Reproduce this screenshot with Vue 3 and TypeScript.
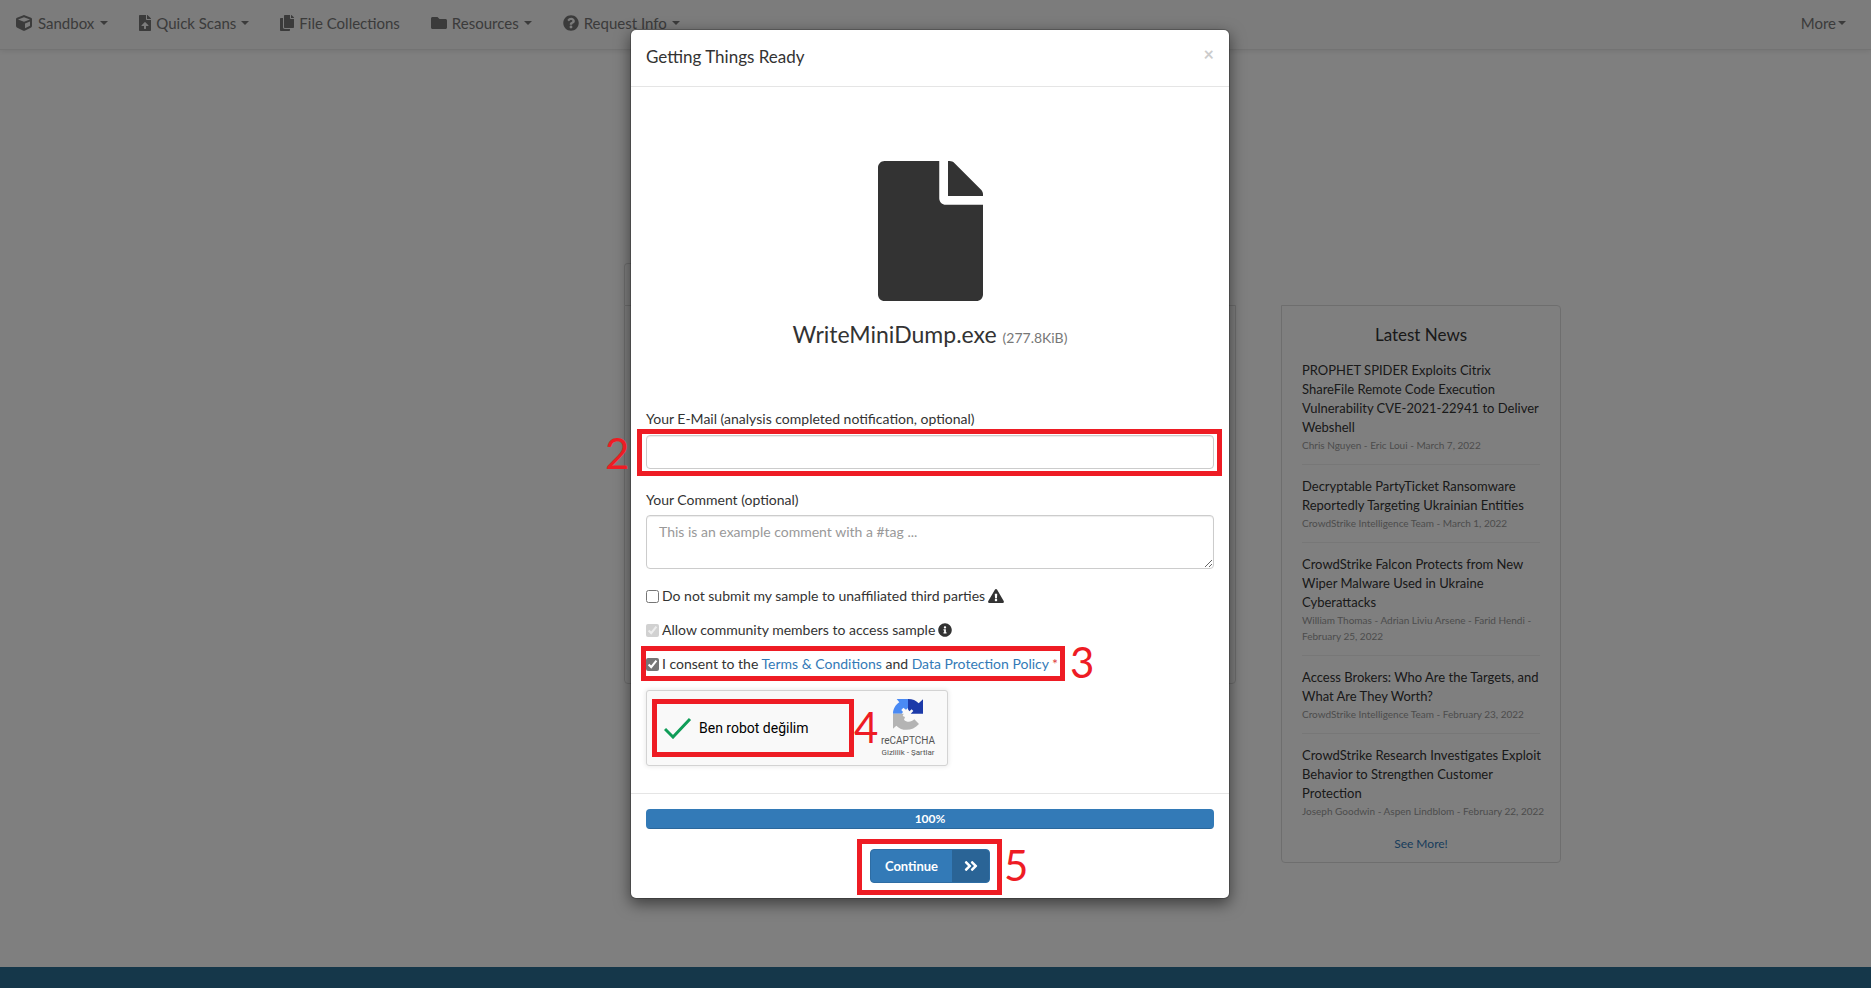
<script setup lang="ts">
import { ref } from 'vue'

interface NavItem {
  label: string
  icon: keyof typeof icons
  menu: boolean
}

interface NewsItem {
  title: string
  meta: string
}

const icons = {
  cube: {
    box: '0 0 512 512',
    width: 16,
    path: 'M239.1 6.3l-208 78c-18.7 7-31.1 25-31.1 45v225.1c0 18.2 10.3 34.8 26.5 42.9l208 104c13.5 6.8 29.4 6.8 42.9 0l208-104c16.3-8.1 26.5-24.8 26.5-42.9V129.3c0-20-12.4-37.9-31.1-44.9l-208-78C262 2.2 250 2.2 239.1 6.3zM256 68.4l192 72v1.1l-192 78-192-78v-1.1l192-72zm32 356V275.5l160-65v133.9l-160 80z',
  },
  upload: {
    box: '0 0 384 512',
    width: 12,
    path: 'M224 136V0H24C10.7 0 0 10.7 0 24v464c0 13.3 10.7 24 24 24h336c13.3 0 24-10.7 24-24V160H248c-13.2 0-24-10.8-24-24zm65.18 216.01H224v80c0 8.84-7.16 16-16 16h-32c-8.84 0-16-7.16-16-16v-80H94.82c-14.28 0-21.41-17.29-11.27-27.36l96.42-95.7c6.65-6.61 17.39-6.61 24.04 0l96.42 95.7c10.15 10.07 3.03 27.36-11.25 27.36zM377 105L279.1 7c-4.5-4.5-10.6-7-17-7H256v128h128v-6.1c0-6.3-2.5-12.4-7-16.9z',
  },
  copy: {
    box: '0 0 448 512',
    width: 14,
    path: 'M320 448v40c0 13.255-10.745 24-24 24H24c-13.255 0-24-10.745-24-24V120c0-13.255 10.745-24 24-24h72v296c0 30.879 25.121 56 56 56h168zm0-344V0H152c-13.255 0-24 10.745-24 24v368c0 13.255 10.745 24 24 24h272c13.255 0 24-10.745 24-24V128H344c-13.2 0-24-10.8-24-24zm120.971-31.029L375.029 7.029A24 24 0 0 0 358.059 0H352v96h96v-6.059a24 24 0 0 0-7.029-16.97z',
  },
  folder: {
    box: '0 0 512 512',
    width: 16,
    path: 'M464 128H272l-64-64H48C21.49 64 0 85.49 0 112v288c0 26.51 21.49 48 48 48h416c26.51 0 48-21.49 48-48V176c0-26.51-21.49-48-48-48z',
  },
  question: {
    box: '0 0 512 512',
    width: 16,
    path: 'M504 256c0 136.997-111.043 248-248 248S8 392.997 8 256C8 119.083 119.043 8 256 8s248 111.083 248 248zM262.655 90c-54.497 0-89.255 22.957-116.549 63.758-3.536 5.286-2.353 12.415 2.715 16.258l34.699 26.31c5.205 3.947 12.621 3.008 16.665-2.122 17.864-22.658 30.113-35.797 57.303-35.797 20.429 0 45.698 13.148 45.698 32.958 0 14.976-12.363 22.667-32.534 33.976C247.128 238.528 216 254.941 216 296v4c0 6.627 5.373 12 12 12h56c6.627 0 12-5.373 12-12v-1.333c0-28.462 83.186-29.647 83.186-106.667 0-58.002-60.165-102-116.531-102zM256 338c-25.365 0-46 20.635-46 46 0 25.364 20.635 46 46 46s46-20.636 46-46c0-25.365-20.635-46-46-46z',
  },
}

const navItems: NavItem[] = [
  { label: 'Sandbox', icon: 'cube', menu: true },
  { label: 'Quick Scans', icon: 'upload', menu: true },
  { label: 'File Collections', icon: 'copy', menu: false },
  { label: 'Resources', icon: 'folder', menu: true },
  { label: 'Request Info', icon: 'question', menu: true },
]

const news: NewsItem[] = [
  {
    title: 'PROPHET SPIDER Exploits Citrix ShareFile Remote Code Execution Vulnerability CVE-2021-22941 to Deliver Webshell',
    meta: 'Chris Nguyen - Eric Loui - March 7, 2022',
  },
  {
    title: 'Decryptable PartyTicket Ransomware Reportedly Targeting Ukrainian Entities',
    meta: 'CrowdStrike Intelligence Team - March 1, 2022',
  },
  {
    title: 'CrowdStrike Falcon Protects from New Wiper Malware Used in Ukraine Cyberattacks',
    meta: 'William Thomas - Adrian Liviu Arsene - Farid Hendi - February 25, 2022',
  },
  {
    title: 'Access Brokers: Who Are the Targets, and What Are They Worth?',
    meta: 'CrowdStrike Intelligence Team - February 23, 2022',
  },
  {
    title: 'CrowdStrike Research Investigates Exploit Behavior to Strengthen Customer Protection',
    meta: 'Joseph Goodwin - Aspen Lindblom - February 22, 2022',
  },
]

const email = ref('')
const comment = ref('')
const withhold = ref(false)
const community = ref(true)
const consent = ref(true)
const progress = ref(100)
</script>

<template>
  <div class="page">
    <nav class="navbar">
      <a v-for="item in navItems" :key="item.label" class="nav-link" href="#">
        <svg :viewBox="icons[item.icon].box" :width="icons[item.icon].width" height="16" aria-hidden="true">
          <path :d="icons[item.icon].path" />
        </svg>
        <span>{{ item.label }}</span>
        <i v-if="item.menu" class="caret"></i>
      </a>
      <a class="nav-link more" href="#"><span>More</span><i class="caret"></i></a>
    </nav>

    <main class="content">
      <section class="upload-panel">
        <div class="upload-tab"></div>
        <div class="upload-body"></div>
      </section>
      <aside class="news">
        <h2>Latest News</h2>
        <article v-for="entry in news" :key="entry.title">
          <a href="#">{{ entry.title }}</a>
          <p>{{ entry.meta }}</p>
        </article>
        <a class="see-more" href="#">See More!</a>
      </aside>
    </main>

    <footer class="page-footer"></footer>
  </div>

  <div class="backdrop">
    <div class="modal" role="dialog" aria-labelledby="modal-title">
      <header class="modal-header">
        <h1 id="modal-title">Getting Things Ready</h1>
        <button class="close" type="button" aria-label="Close">×</button>
      </header>

      <div class="modal-body">
        <div class="file">
          <svg viewBox="0 0 384 512" width="105" height="140" aria-hidden="true">
            <path d="M224 136V0H24C10.7 0 0 10.7 0 24v464c0 13.3 10.7 24 24 24h336c13.3 0 24-10.7 24-24V160H248c-13.2 0-24-10.8-24-24zm160-14.1v6.1H256V0h6.1c6.4 0 12.5 2.5 17 7l97.9 98c4.5 4.5 7 10.6 7 16.9z" />
          </svg>
          <p>WriteMiniDump.exe <small>(277.8KiB)</small></p>
        </div>

        <label class="field-label" for="email">Your E-Mail (analysis completed notification, optional)</label>
        <div class="marked">
          <input id="email" v-model="email" class="control" type="email" />
          <span class="frame frame-email"></span>
          <span class="step step-email">2</span>
        </div>

        <label class="field-label comment-label" for="comment">Your Comment (optional)</label>
        <textarea id="comment" v-model="comment" class="control" placeholder="This is an example comment with a #tag ..."></textarea>

        <div class="checks">
          <div class="check">
            <input id="withhold" v-model="withhold" type="checkbox" />
            <label for="withhold">Do not submit my sample to unaffiliated third parties</label>
            <svg viewBox="0 0 576 512" width="16" height="14" aria-hidden="true">
              <path d="M569.517 440.013C587.975 472.007 564.806 512 527.94 512H48.054c-36.937 0-59.999-40.055-41.577-71.987L246.423 23.985c18.467-32.009 64.72-31.951 83.154 0l239.94 416.028zM288 354c-25.405 0-46 20.595-46 46s20.595 46 46 46 46-20.595 46-46-20.595-46-46-46zm-43.673-165.346l7.418 136c.347 6.364 5.609 11.346 11.982 11.346h48.546c6.373 0 11.635-4.982 11.982-11.346l7.418-136c.375-6.874-5.098-12.654-11.982-12.654h-63.383c-6.884 0-12.356 5.78-11.981 12.654z" />
            </svg>
          </div>
          <div class="check">
            <input id="community" v-model="community" type="checkbox" disabled />
            <label for="community">Allow community members to access sample</label>
            <svg viewBox="0 0 512 512" width="14" height="14" aria-hidden="true">
              <path d="M256 8C119.043 8 8 119.083 8 256c0 136.997 111.043 248 248 248s248-111.003 248-248C504 119.083 392.957 8 256 8zm0 110c23.196 0 42 18.804 42 42s-18.804 42-42 42-42-18.804-42-42 18.804-42 42-42zm56 254c0 6.627-5.373 12-12 12h-88c-6.627 0-12-5.373-12-12v-24c0-6.627 5.373-12 12-12h12v-64h-12c-6.627 0-12-5.373-12-12v-24c0-6.627 5.373-12 12-12h64c6.627 0 12 5.373 12 12v100h12c6.627 0 12 5.373 12 12v24z" />
            </svg>
          </div>
          <div class="check marked">
            <input id="consent" v-model="consent" type="checkbox" />
            <label for="consent">I consent to the <a href="#">Terms &amp; Conditions</a> and <a href="#">Data Protection Policy</a></label>
            <span class="required">*</span>
            <span class="frame frame-consent"></span>
            <span class="step step-consent">3</span>
          </div>
        </div>

        <div class="captcha marked">
          <svg class="tick" viewBox="0 0 28 22" width="28" height="22" aria-hidden="true">
            <path d="M1 12l8 8L26 2" />
          </svg>
          <span class="captcha-text">Ben robot değilim</span>
          <div class="captcha-brand">
            <svg viewBox="12 9 96 96" width="32" height="32" aria-hidden="true">
              <path fill="#4a8af4" d="M60 12H26l8 10C22 30 15 42 15 56h26l4-5-5-6 6-7 8 6 6-5z" />
              <path fill="#1c3aa9" d="M60 12c14 0 24 4 32 13l13-12v43H68l8-8-5-5-7 6-4-6z" />
              <path fill="#b4b4b4" d="M15 56h32l-3 7 7 3-3 8c8 9 22 8 31-1l14 14c-19 22-51 23-68 5L15 101z" />
            </svg>
            <span class="brand-name">reCAPTCHA</span>
            <span class="brand-links"><a href="#">Gizlilik</a> - <a href="#">Şartlar</a></span>
          </div>
          <span class="frame frame-captcha"></span>
          <span class="step step-captcha">4</span>
        </div>
      </div>

      <footer class="modal-footer">
        <div class="progress" role="progressbar" :aria-valuenow="progress">
          <div class="bar" :style="{ width: progress + '%' }">{{ progress }}%</div>
        </div>
        <div class="marked">
          <button class="continue" type="button">
            <span class="continue-text">Continue</span>
            <span class="continue-icon">
              <svg viewBox="0 0 448 512" width="14" height="16" aria-hidden="true">
                <path d="M224.3 273l-136 136c-9.4 9.4-24.6 9.4-33.9 0l-22.6-22.6c-9.4-9.4-9.4-24.6 0-33.9l96.4-96.4-96.4-96.4c-9.4-9.4-9.4-24.6 0-33.9L54.3 103c9.4-9.4 24.6-9.4 33.9 0l136 136c9.5 9.4 9.5 24.6.1 34zm192-34l-136-136c-9.4-9.4-24.6-9.4-33.9 0l-22.6 22.6c-9.4 9.4-9.4 24.6 0 33.9l96.4 96.4-96.4 96.4c-9.4 9.4-9.4 24.6 0 33.9l22.6 22.6c9.4 9.4 24.6 9.4 33.9 0l136-136c9.4-9.2 9.4-24.4 0-33.8z" />
              </svg>
            </span>
          </button>
          <span class="frame frame-continue"></span>
          <span class="step step-continue">5</span>
        </div>
      </footer>
    </div>
  </div>
</template>

<style>
body {
  margin: 0;
}
</style>

<style scoped>
.page,
.backdrop {
  box-sizing: border-box;
  min-height: 100vh;
  font-family: Lato, "Open Sans", sans-serif;
  font-size: 13px;
  line-height: 20px;
  color: #333;
}
.page *,
.backdrop * {
  box-sizing: border-box;
}
.page {
  display: flex;
  flex-direction: column;
  background: #fff;
}
a {
  color: #337ab7;
  text-decoration: none;
}
svg {
  fill: currentColor;
  flex: none;
}

.navbar {
  display: flex;
  align-items: center;
  gap: 31px;
  height: 50px;
  padding: 0 25px 4px 16px;
  background: #f8f8f8;
  border-bottom: 1px solid #e7e7e7;
  box-shadow: 0 1px 6px rgba(0, 0, 0, 0.1);
}
.nav-link {
  display: flex;
  align-items: center;
  gap: 5px;
  font-size: 15px;
  color: #777;
}
.nav-link:first-child {
  gap: 6px;
}
.more {
  gap: 2px;
  margin-left: auto;
}
.caret {
  border-top: 4px solid currentColor;
  border-left: 4px solid transparent;
  border-right: 4px solid transparent;
}

.content {
  flex: 1;
  display: grid;
  grid-template-columns: minmax(0, 2fr) 612px 325px minmax(0, 1fr);
  align-items: start;
  padding-left: 4px;
}
.upload-panel {
  grid-column: 2;
  margin-top: 213px;
}
.upload-tab {
  width: 160px;
  height: 42px;
  border: 1px solid #ddd;
  border-bottom: 0;
  border-radius: 4px 4px 0 0;
}
.upload-body {
  height: 379px;
  border: 1px solid #ddd;
  border-radius: 0 0 4px 4px;
}
.news {
  grid-column: 3;
  margin: 255px 0 0 45px;
  padding: 19px 20px 8px;
  border: 1px solid #ddd;
  border-radius: 0 4px 4px 4px;
}
.news h2 {
  margin: 0 0 4px;
  font-size: 17px;
  font-weight: 400;
  line-height: 20px;
  text-align: center;
}
.news article {
  padding: 12px 0 11px;
  border-bottom: 1px solid #eee;
}
.news article:last-of-type {
  border-bottom: 0;
}
.news article a {
  display: block;
  margin-right: -4px;
  line-height: 19px;
  color: #333;
}
.news article p {
  margin: 0 -8px 0 0;
  font-size: 10px;
  line-height: 16px;
  color: #999;
}
.see-more {
  display: block;
  margin-top: 4px;
  font-size: 12px;
  text-align: center;
}
.page-footer {
  height: 21px;
  background: #2a6e94;
}

.backdrop {
  position: absolute;
  inset: 0;
  display: flex;
  justify-content: center;
  align-items: flex-start;
  padding: 29px 11px 29px 0;
  background: rgba(0, 0, 0, 0.5);
}
.modal {
  width: 600px;
  background: #fff;
  border: 1px solid rgba(0, 0, 0, 0.2);
  background-clip: padding-box;
  border-radius: 6px;
  box-shadow: 0 5px 15px rgba(0, 0, 0, 0.5);
  font-size: 14px;
}
.modal-header {
  display: flex;
  align-items: flex-start;
  justify-content: space-between;
  padding: 14px 15px 17px;
  border-bottom: 1px solid #e5e5e5;
}
.modal-header h1 {
  margin: 0;
  font-size: 17px;
  font-weight: 400;
  line-height: 25px;
}
.close {
  padding: 0;
  border: 0;
  background: none;
  font: 700 18px/20px Lato, sans-serif;
  color: #ccc;
}
.modal-body {
  padding: 74px 15px 27px;
}
.file {
  text-align: center;
}
.file svg {
  display: block;
  margin: 0 auto;
}
.file p {
  margin: 18px 0 56px;
  font-size: 23px;
  line-height: 30px;
}
.file small {
  font-size: 14px;
  color: #777;
}
.field-label {
  display: block;
  margin-bottom: 6px;
}
.comment-label {
  margin: 21px 0 5px;
}
.control {
  display: block;
  width: 100%;
  height: 34px;
  padding: 6px 12px;
  border: 1px solid #ccc;
  border-radius: 4px;
  background: #fff;
  box-shadow: inset 0 1px 1px rgba(0, 0, 0, 0.075);
  font: inherit;
  color: #555;
}
textarea.control {
  height: 54px;
  resize: vertical;
}
.control::placeholder {
  color: #999;
}
.checks {
  display: flex;
  flex-direction: column;
  gap: 14px;
  margin: 17px 0 16px;
}
.check {
  display: flex;
  align-items: center;
  gap: 3px;
}
.check input {
  width: 13px;
  height: 13px;
  margin: 0;
  accent-color: #767676;
}
.required {
  color: #e0403f;
}

.captcha {
  display: flex;
  align-items: center;
  width: 302px;
  height: 76px;
  padding-left: 17px;
  border: 1px solid #d3d3d3;
  border-radius: 3px;
  background: #f9f9f9;
  box-shadow: 0 0 4px 1px rgba(0, 0, 0, 0.08);
  font-family: Roboto, sans-serif;
}
.tick path {
  fill: none;
  stroke: #0f9d58;
  stroke-width: 3;
}
.captcha-text {
  margin-left: 7px;
  font-size: 14px;
  color: #000;
}
.captcha-brand {
  display: flex;
  flex-direction: column;
  align-items: center;
  width: 76px;
  margin: 0 1px 0 auto;
  color: #555;
}
.brand-name {
  margin-top: 4px;
  font-size: 10px;
  line-height: 14px;
}
.brand-links {
  font-size: 8px;
  line-height: 10px;
}
.brand-links a {
  color: inherit;
}

.modal-footer {
  display: flex;
  flex-direction: column;
  align-items: center;
  gap: 20px;
  padding: 15px;
  border-top: 1px solid #e5e5e5;
}
.progress {
  width: 100%;
  height: 20px;
  overflow: hidden;
  border-radius: 4px;
  background: #f5f5f5;
}
.bar {
  height: 100%;
  background: #337ab7;
  box-shadow: inset 0 -1px 0 rgba(0, 0, 0, 0.15);
  font-size: 12px;
  font-weight: 700;
  line-height: 19px;
  text-align: center;
  color: #fff;
}
.continue {
  display: flex;
  height: 34px;
  padding: 0;
  overflow: hidden;
  border: 1px solid #2e6da4;
  border-radius: 4px;
  background: #337ab7;
  font: 700 13px/32px Lato, sans-serif;
  color: #fff;
}
.continue-text {
  width: 81px;
}
.continue-icon {
  display: flex;
  align-items: center;
  justify-content: center;
  width: 37px;
  height: 32px;
  background: #2a6496;
}

/* Numbered walkthrough annotations laid over the form */
.marked {
  position: relative;
}
.frame {
  position: absolute;
  border: 5px solid #ee1c24;
  pointer-events: none;
}
.step {
  position: absolute;
  font: 400 42px/48px Lato, sans-serif;
  color: #ee1c24;
}
.frame-email {
  inset: -6px -8px -7px -9px;
}
.step-email {
  top: -6px;
  left: -41px;
}
.frame-consent {
  top: -8px;
  left: -5px;
  width: 424px;
  height: 35px;
}
.step-consent {
  top: -16px;
  left: 424px;
}
.frame-captcha {
  top: 8px;
  left: 5px;
  width: 202px;
  height: 58px;
}
.step-captcha {
  top: 12px;
  left: 207px;
}
.frame-continue {
  inset: -10px -12px -12px -13px;
}
.step-continue {
  top: -8px;
  left: 134px;
}
</style>
